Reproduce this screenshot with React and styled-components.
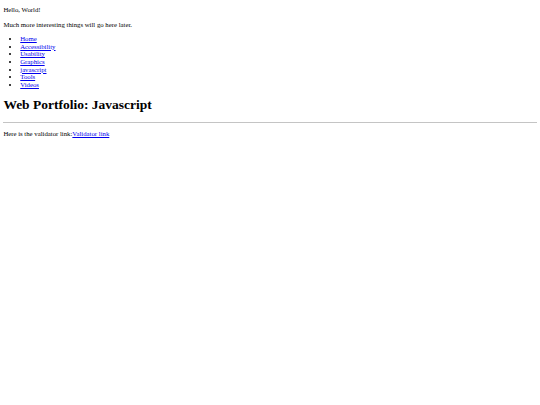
import React from "react";
import styled, { createGlobalStyle } from "styled-components";

const GlobalStyle = createGlobalStyle`
    html, body {
        background: #ffffff;
    }
    body {
        margin: 3.375px;
        font-family: "Liberation Serif", "Times New Roman", serif;
        font-size: 6.75px;
        line-height: 7.6px;
        color: #000000;
    }
`;

const links = ["Home", "Accessibility", "Usability", "Graphics", "javascript", "Tools", "Videos"];

export default function App() {
    return (
        <Page>
            <GlobalStyle />
            <Text>Hello, World!</Text>
            <Text>Much more interesting things will go here later.</Text>
            <NavList>
                {links.map((name) => (
                    <NavItem key={name}>
                        <Link href="#">{name}</Link>
                    </NavItem>
                ))}
            </NavList>
            <Title>Web Portfolio: Javascript</Title>
            <Rule />
            <Text>
                Here is the validator link:<Link href="#">Validator link</Link>
            </Text>
        </Page>
    );
}

const Page = styled.div`
    display: block;
    padding-top: 0.1px;
`;

const Text = styled.p`
    margin: 6.75px 0;
    &:first-of-type {
        margin-top: 3px;
    }
`;

const NavList = styled.ul`
    margin: 6.75px 0;
    padding-left: 16.875px;
    list-style: disc;
`;

const NavItem = styled.li`
    line-height: 7.6px;
`;

const Link = styled.a`
    color: #0000ee;
    text-decoration: underline;
`;

const Title = styled.h1`
    font-size: 13.5px;
    line-height: 15.6px;
    font-weight: bold;
    margin: 9.05px 0;
`;

const Rule = styled.hr`
    margin: 3.375px 0;
    border: 0;
    border-top: 1px solid #c4c4c4;
    height: 0;
`;
